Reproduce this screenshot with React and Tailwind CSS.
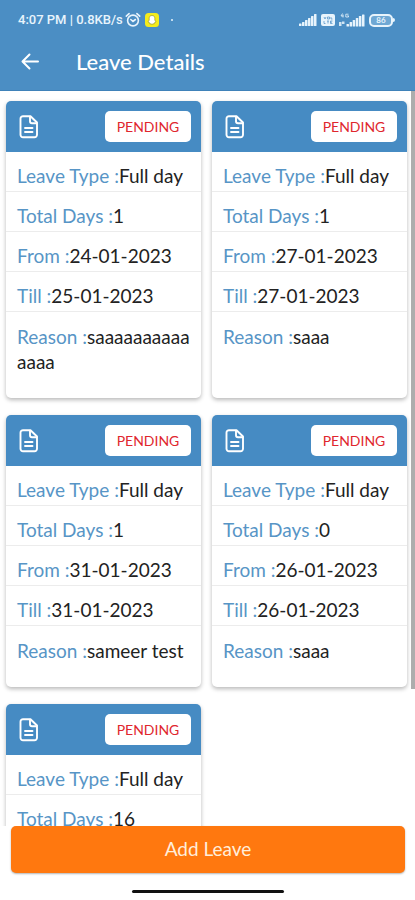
const leaves = [
  { id: 1, type: 'Full day', days: '1', from: '24-01-2023', till: '25-01-2023', reason: 'saaaaaaaaaaaaaa', status: 'PENDING' },
  { id: 2, type: 'Full day', days: '1', from: '27-01-2023', till: '27-01-2023', reason: 'saaa', status: 'PENDING' },
  { id: 3, type: 'Full day', days: '1', from: '31-01-2023', till: '31-01-2023', reason: 'sameer test', status: 'PENDING' },
  { id: 4, type: 'Full day', days: '0', from: '26-01-2023', till: '26-01-2023', reason: 'saaa', status: 'PENDING' },
  { id: 5, type: 'Full day', days: '16', status: 'PENDING' },
];

function FileIcon() {
  return (
    <svg className="h-6 w-5" viewBox="0 0 20 24" fill="none" stroke="currentColor" strokeWidth="1.9" strokeLinecap="round" strokeLinejoin="round" aria-hidden="true">
      <path d="M4 1.200h7.500L18 7.500v12.300a2.500 2.500 0 0 1-2.500 2.500H4a2.500 2.500 0 0 1-2.500-2.500V3.700A2.500 2.500 0 0 1 4 1.200z" />
      <path d="M11 1.800v4.400a2 2 0 0 0 2 2h4.500" />
      <path d="M6 13h7.500M6 17h7.500" />
    </svg>
  );
}

function AlarmIcon() {
  return (
    <svg className="h-4 w-4" viewBox="0 0 16 16" fill="none" stroke="currentColor" strokeWidth="1.6" strokeLinecap="round" aria-hidden="true">
      <circle cx="8" cy="8.500" r="5.400" />
      <path d="M1.300 4.200l2.800-2.600M14.700 4.200l-2.800-2.600M5.800 7.500L8 9.400l2.400-1.900" />
    </svg>
  );
}

function GhostIcon() {
  return (
    <svg className="h-3.5 w-3.5" viewBox="0 0 14 14" aria-hidden="true">
      <rect width="14" height="14" rx="3.500" fill="#f4ec1c" />
      <path d="M7 2.500c-2 0-2.900 1.400-2.800 3.100v1.500L3 8.800l1.300.7.5 1.400 1.200-.1 1 .7 1-.7 1.200.1.500-1.400 1.300-.7-1.200-1.700V5.600C9.900 3.900 9 2.500 7 2.500z" fill="#fff" stroke="#8a8420" strokeWidth=".6" />
    </svg>
  );
}

function SignalIcon() {
  return (
    <svg className="h-3 w-[18px]" viewBox="0 0 18 12" fill="currentColor" aria-hidden="true">
      <rect x="0" y="9.500" width="2.500" height="2.500" rx=".5" />
      <rect x="3" y="8" width="2.500" height="4" rx=".5" />
      <rect x="6" y="6" width="2.500" height="6" rx=".5" />
      <rect x="9" y="4" width="2.500" height="8" rx=".5" />
      <rect x="12" y="2" width="2.500" height="10" rx=".5" />
      <rect x="15" y="0" width="2.500" height="12" rx=".5" />
    </svg>
  );
}

function VolteIcon() {
  return (
    <svg className="h-3 w-[14px]" viewBox="0 0 14 12" aria-hidden="true">
      <rect width="14" height="12" rx="2" fill="#e8f4fc" />
      <path d="M3 3l1 2 1-2M6.500 3h2v2h-2zM10 3v2h1.500M3 7v2.500h1.500M6 7h2M7 7v2.500M11.500 7H9.500v2.500h2M9.500 8.200h1.500" fill="none" stroke="#4b8ec4" strokeWidth=".7" />
    </svg>
  );
}

function DataSignalIcon() {
  return (
    <svg className="h-[15px] w-[26px]" viewBox="0 0 26 15" fill="currentColor" aria-hidden="true">
      <path d="M3.500.5L2 3h2.500M4 1.500V4.500M9.500 1.200H6.800v2.800h2.700V2.800H8.300" fill="none" stroke="currentColor" strokeWidth=".8" />
      <path d="M0 9h2.500v4H0zM3 8.500h2.500v2.500H3z" opacity=".85" />
      <rect x="7.500" y="11" width="2.500" height="2.500" rx=".5" />
      <rect x="10.600" y="9" width="2.500" height="4.500" rx=".5" />
      <rect x="13.700" y="7" width="2.500" height="6.500" rx=".5" />
      <rect x="16.800" y="5" width="2.500" height="8.500" rx=".5" />
      <rect x="19.900" y="3" width="2.500" height="10.500" rx=".5" />
      <rect x="23" y="1.500" width="2.500" height="12" rx=".5" />
    </svg>
  );
}

function Battery() {
  return (
    <div className="flex items-center">
      <div className="flex h-[13px] w-6 items-center justify-center rounded-[5px] border-2 border-[#e8f4fc] bg-[#6fa8d4]">
        <span className="text-[8px] leading-none font-bold">86</span>
      </div>
      <div className="h-1 w-0.5 rounded-r bg-[#e8f4fc]" />
    </div>
  );
}

function StatusBar() {
  return (
    <div className="flex h-10 items-center justify-between pr-5 pl-[18px] text-[#e8f4fc]">
      <div className="flex items-center">
        <span className="font-[Roboto,sans-serif] text-[13px] font-medium">4:07 PM | 0.8KB/s</span>
        <span className="ml-0.5"><AlarmIcon /></span>
        <span className="ml-1"><GhostIcon /></span>
        <span className="ml-3 h-0.5 w-0.5 rounded-full bg-[#e8f4fc]" />
      </div>
      <div className="flex items-center gap-1">
        <SignalIcon />
        <VolteIcon />
        <DataSignalIcon />
        <Battery />
      </div>
    </div>
  );
}

function Field({ label, value }) {
  return (
    <div className="border-b border-[#ececec] px-[11px] pt-[11px] pb-[3px]">
      <dt className="inline text-[#5795c6]">{label} :</dt>
      <dd className="inline">{value}</dd>
    </div>
  );
}

function LeaveCard({ leave }) {
  return (
    <article className="overflow-hidden rounded-[5px] bg-white shadow-[0_2px_4px_rgba(0,0,0,0.28)]">
      <div className="flex h-[51px] items-center justify-between bg-[#468bc3] pr-2.5 pl-[13px] text-white">
        <FileIcon />
        <span className="flex h-[31px] w-[86px] items-center justify-center rounded-[5px] bg-white text-sm text-[#e0262e]">
          {leave.status}
        </span>
      </div>
      <dl className="text-[19px] leading-[25px] text-[#222]">
        <Field label="Leave Type" value={leave.type} />
        <Field label="Total Days" value={leave.days} />
        {leave.from && <Field label="From" value={leave.from} />}
        {leave.till && <Field label="Till" value={leave.till} />}
        {leave.reason && (
          <div className="px-[11px] pt-3 pb-6">
            <dt className="inline text-[#5795c6]">Reason :</dt>
            <dd className="inline break-all">{leave.reason}</dd>
          </div>
        )}
      </dl>
    </article>
  );
}

export default function App() {
  return (
    <div className="flex h-screen flex-col bg-white font-[Lato,sans-serif]">
      <header className="shrink-0 border-b border-[#3f82b9] bg-[#4b8ec4]">
        <StatusBar />
        <div className="flex h-[50px] items-start pt-2.5 pl-5 text-white">
          <button type="button" aria-label="Back" className="flex h-6 w-5 items-center">
            <svg className="h-5 w-5" viewBox="0 0 20 20" fill="none" stroke="currentColor" strokeWidth="2" strokeLinecap="round" strokeLinejoin="round" aria-hidden="true">
              <path d="M18 9.500H3M9.500 2.500l-7 7 7 7" />
            </svg>
          </button>
          <h1 className="ml-9 text-[22px] leading-6 font-medium">Leave Details</h1>
        </div>
      </header>

      <main className="relative min-h-0 flex-1 overflow-hidden">
        <div className="grid grid-cols-2 gap-x-[11px] gap-y-[17px] pt-2.5 pr-2 pl-1.5">
          {leaves.map(leave => (
            <LeaveCard key={leave.id} leave={leave} />
          ))}
        </div>
        {/* scroll thumb */}
        <div className="absolute top-0 right-0 h-[598px] w-1 bg-[#adadad]" />
      </main>

      <footer className="shrink-0 pb-[7px]">
        <div className="pr-2.5 pl-[11px]">
          <button type="button" className="h-[47px] w-full rounded-[5px] bg-[#ff780f] text-[19px] text-[#ffeedb] shadow-[0_1px_2px_rgba(0,0,0,0.3)]">
            Add Leave
          </button>
        </div>
        <div className="mx-auto mt-[17px] h-[3px] w-[152px] rounded-full bg-[#111]" />
      </footer>
    </div>
  );
}
